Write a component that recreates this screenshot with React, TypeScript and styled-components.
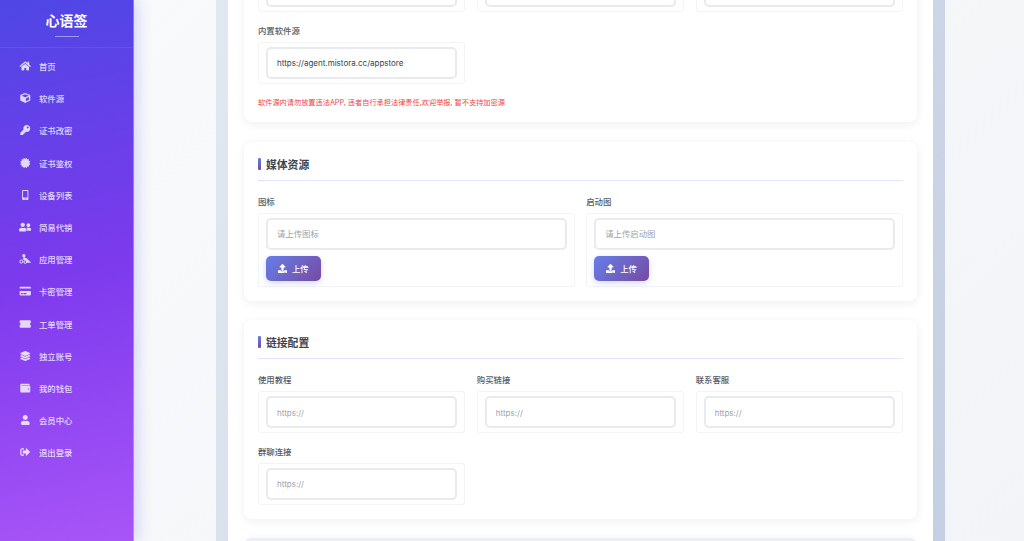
import React from 'react';
import styled, { createGlobalStyle } from 'styled-components';
import {
  FaHome, FaCube, FaKey, FaCertificate, FaMobileAlt, FaUserFriends,
  FaCreditCard, FaLayerGroup, FaWallet, FaUser, FaSignOutAlt, FaUpload,
} from 'react-icons/fa';
import { FaTicketSimple } from 'react-icons/fa6';

const Global = createGlobalStyle`
  html, body { margin: 0; padding: 0; height: 100%; overflow: hidden; }
  body { font-family: Inter, "Noto Sans CJK SC", sans-serif; background: #f5f7fa; }
  * { box-sizing: border-box; }
`;

const Shell = styled.div`
  display: flex;
  width: 1024px;
  height: 541px;
  overflow: hidden;
  background: linear-gradient(135deg, #f8fafc 0%, #f2f4f7 100%);
`;

const Sidebar = styled.aside`
  position: relative;
  z-index: 2;
  flex: 0 0 134px;
  height: 541px;
  background: linear-gradient(168deg, #4f46e5 0%, #7c3aed 50%, #a855f7 100%);
  border-right: 1px solid rgba(255, 255, 255, 0.3);
  box-shadow: 3px 0 14px rgba(79, 70, 229, 0.22);
`;

const Brand = styled.div`
  height: 48px;
  padding-top: 12px;
  display: flex;
  flex-direction: column;
  align-items: center;
  border-bottom: 1px solid rgba(255, 255, 255, 0.08);
`;

const BrandName = styled.div`
  color: #fff;
  font-size: 14px;
  line-height: 18px;
  font-weight: 700;
`;

const BrandLine = styled.div`
  width: 24px;
  height: 1px;
  margin-top: 6px;
  background: rgba(255, 255, 255, 0.45);
`;

const Nav = styled.nav`
  display: flex;
  flex-direction: column;
  padding-top: 2px;
`;

const NavItem = styled.a`
  display: flex;
  align-items: center;
  height: 32.2px;
  padding-left: 19px;
  color: rgba(255, 255, 255, 0.8);
  font-size: 8.4px;
  font-weight: 500;
`;

const NavIcon = styled.span`
  display: flex;
  align-items: center;
  justify-content: center;
  width: 12px;
  margin-right: 8px;
  color: rgba(255, 255, 255, 0.8);
  svg { height: 10px; width: 12.5px; flex: none; }
`;

const Main = styled.main`
  flex: 1;
  height: 541px;
  overflow: hidden;
  padding-left: 82px;
`;

const Frame = styled.div`
  width: 729px;
  height: 541px;
  padding: 0 12px;
  background: linear-gradient(115deg, #e2e8f0 0%, #c4cfe3 100%);
`;

const Panel = styled.div`
  height: 541px;
  padding: 0 16px;
  background: #fff;
  overflow: hidden;
`;

const Stack = styled.div`
  display: flex;
  flex-direction: column;
  margin-top: -60px;
  gap: 19.5px;
`;

const Card = styled.section<{ $muted?: boolean }>`
  background: ${(p) => (p.$muted ? '#eceef4' : '#fff')};
  border-radius: 8px;
  padding: 14px;
  box-shadow: 0 2px 10px rgba(15, 23, 42, 0.07);
`;

const SectionTitle = styled.h3`
  margin: 0 0 16px;
  height: 25px;
  padding-bottom: 8px;
  border-bottom: 1px solid #e0e4ff;
  display: flex;
  align-items: center;
  gap: 5px;
  color: #3f4550;
  font-size: 10.8px;
  font-weight: 700;
`;

const TitleBar = styled.span`
  width: 3px;
  height: 12px;
  border-radius: 1px;
  background: linear-gradient(180deg, #667eea, #764ba2);
`;

const Grid = styled.div<{ $cols: number }>`
  display: grid;
  grid-template-columns: repeat(${(p) => p.$cols}, 1fr);
  gap: 13.5px 11.5px;
`;

const Field = styled.div``;

const Label = styled.div`
  height: 11px;
  margin-bottom: 5px;
  color: #555b66;
  font-size: 8.4px;
  line-height: 11px;
  font-weight: 500;
`;

const FieldBox = styled.div<{ $tall?: boolean }>`
  padding: 4px 7px ${(p) => (p.$tall ? 5 : 4)}px;
  border: 1px solid #f3f4f6;
  border-radius: 3px;
  background: #fff;
`;

const Input = styled.input<{ $cjk?: boolean }>`
  display: block;
  width: 100%;
  height: 32px;
  padding: 1px 9px 0;
  border: 2px solid #e9eaee;
  border-radius: 5px;
  background: #fff;
  color: #374151;
  font-family: inherit;
  font-size: ${(p) => (p.$cjk ? 8.4 : 8)}px;
  outline: none;
  &::placeholder { color: #9ca3af; opacity: 1; }
`;

const UploadButton = styled.button`
  display: flex;
  align-items: center;
  gap: 5px;
  height: 25px;
  width: 55px;
  margin-top: 6px;
  padding: 0 12px;
  border: 0;
  border-radius: 5px;
  background: linear-gradient(135deg, #667eea 0%, #764ba2 100%);
  box-shadow: 0 2px 6px rgba(102, 126, 234, 0.3);
  color: #fff;
  font-family: inherit;
  font-size: 8.4px;
  font-weight: 500;
  svg { font-size: 9px; flex: none; }
`;

const Warning = styled.p`
  margin: 13.5px 0 0;
  color: #ef4444;
  font-size: 7.2px;
  line-height: 11px;
`;

const AppsIcon = () => (
  <svg viewBox="0 0 12 10" fill="currentColor">
    <circle cx="4.6" cy="1.7" r="1.6" />
    <circle cx="2" cy="7.6" r="1.5" fill="none" stroke="currentColor" strokeWidth="1" />
    <circle cx="6" cy="8" r="1.4" fill="none" stroke="currentColor" strokeWidth="1" />
    <path d="M3.2 5.6 L4.6 3 L7.6 4.6 L12 8.8 L8 8.8 L7.2 6.4 Z" />
  </svg>
);

const nav: [React.ComponentType, string][] = [
  [FaHome, '首页'], [FaCube, '软件源'], [FaKey, '证书改密'], [FaCertificate, '证书鉴权'],
  [FaMobileAlt, '设备列表'], [FaUserFriends, '简易代销'], [AppsIcon, '应用管理'], [FaCreditCard, '卡密管理'],
  [FaTicketSimple, '工单管理'], [FaLayerGroup, '独立账号'], [FaWallet, '我的钱包'], [FaUser, '会员中心'], [FaSignOutAlt, '退出登录'],
];

const TextField = ({ label, value, placeholder }: { label: string; value?: string; placeholder?: string }) => (
  <Field>
    <Label>{label}</Label>
    <FieldBox><Input readOnly value={value} placeholder={placeholder} /></FieldBox>
  </Field>
);

const UploadField = ({ label, placeholder }: { label: string; placeholder: string }) => (
  <Field>
    <Label>{label}</Label>
    <FieldBox $tall>
      <Input $cjk readOnly placeholder={placeholder} />
      <UploadButton><FaUpload />上传</UploadButton>
    </FieldBox>
  </Field>
);

export default function App() {
  return (
    <Shell>
      <Global />
      <Sidebar>
        <Brand>
          <BrandName>心语签</BrandName>
          <BrandLine />
        </Brand>
        <Nav>
          {nav.map(([Icon, text]) => (
            <NavItem key={text}><NavIcon><Icon /></NavIcon>{text}</NavItem>
          ))}
        </Nav>
      </Sidebar>
      <Main>
        <Frame>
          <Panel>
            <Stack>
              <Card>
                <Grid $cols={3}>
                  <TextField label="软件源名称" placeholder="" />
                  <TextField label="软件源简介" placeholder="" />
                  <TextField label="软件源公告" placeholder="" />
                  <TextField label="内置软件源" value="https://agent.mistora.cc/appstore" />
                </Grid>
                <Warning>软件源内请勿放置违法APP, 违者自行承担法律责任,欢迎举报, 暂不支持加密源</Warning>
              </Card>
              <Card>
                <SectionTitle><TitleBar />媒体资源</SectionTitle>
                <Grid $cols={2}>
                  <UploadField label="图标" placeholder="请上传图标" />
                  <UploadField label="启动图" placeholder="请上传启动图" />
                </Grid>
              </Card>
              <Card>
                <SectionTitle><TitleBar />链接配置</SectionTitle>
                <Grid $cols={3}>
                  <TextField label="使用教程" placeholder="https://" />
                  <TextField label="购买链接" placeholder="https://" />
                  <TextField label="联系客服" placeholder="https://" />
                  <TextField label="群聊连接" placeholder="https://" />
                </Grid>
              </Card>
              <Card $muted />
            </Stack>
          </Panel>
        </Frame>
      </Main>
    </Shell>
  );
}
